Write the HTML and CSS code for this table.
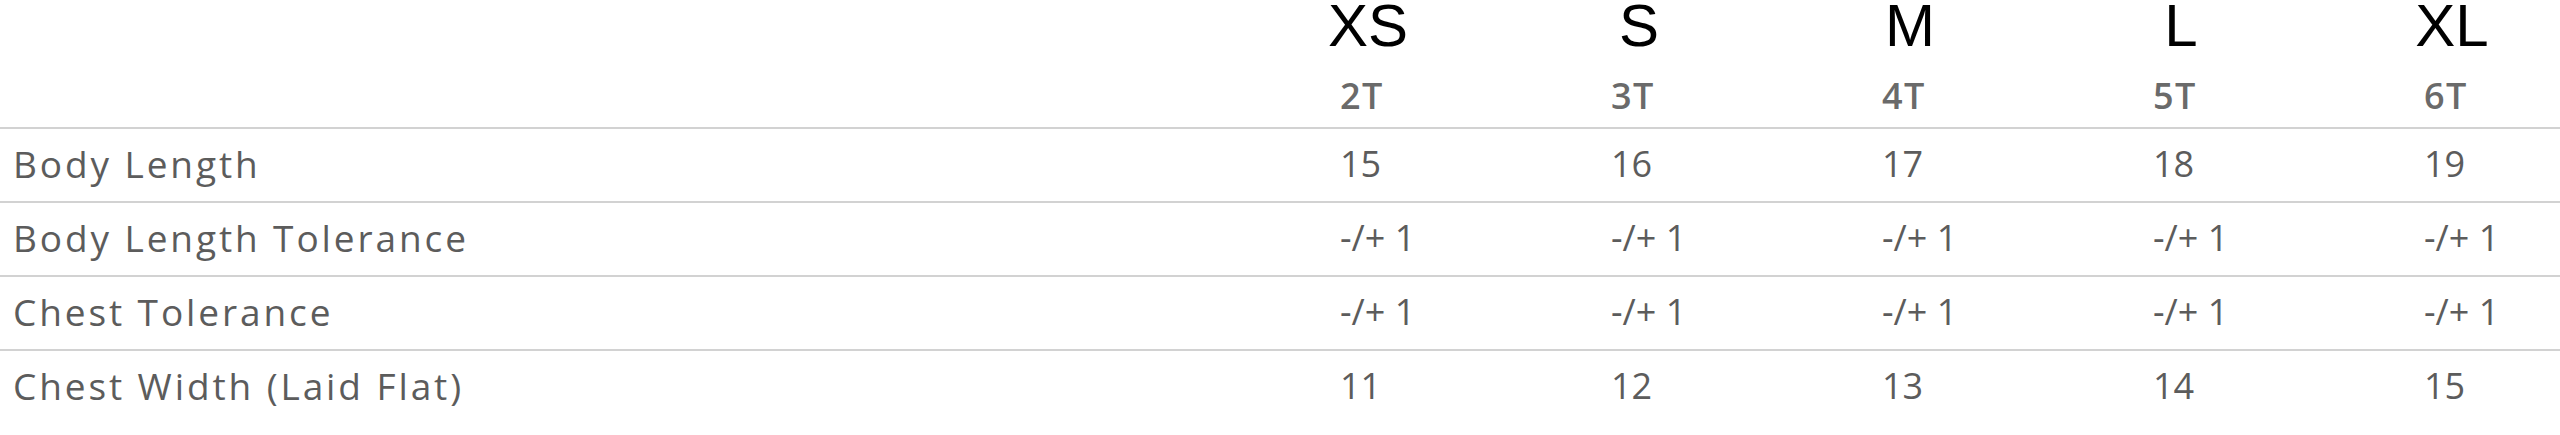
FILE: index.html
```html
<!DOCTYPE html>
<html lang="en">
<head>
<meta charset="utf-8">
<title>Size Chart</title>
<link rel="stylesheet" href="styles.css">
</head>
<body>
<div class="chart">
  <div class="row sizes">
    <div class="cell"></div>
    <div class="cell"><span class="size">XS</span></div>
    <div class="cell"><span class="size">S</span></div>
    <div class="cell"><span class="size">M</span></div>
    <div class="cell"><span class="size">L</span></div>
    <div class="cell"><span class="size">XL</span></div>
  </div>
  <div class="row sub">
    <div class="cell"></div>
    <div class="cell">2T</div>
    <div class="cell">3T</div>
    <div class="cell">4T</div>
    <div class="cell">5T</div>
    <div class="cell">6T</div>
  </div>
  <div class="row data">
    <div class="cell label">Body Length</div>
    <div class="cell">15</div>
    <div class="cell">16</div>
    <div class="cell">17</div>
    <div class="cell">18</div>
    <div class="cell">19</div>
  </div>
  <div class="row data">
    <div class="cell label">Body Length Tolerance</div>
    <div class="cell">-/+ 1</div>
    <div class="cell">-/+ 1</div>
    <div class="cell">-/+ 1</div>
    <div class="cell">-/+ 1</div>
    <div class="cell">-/+ 1</div>
  </div>
  <div class="row data">
    <div class="cell label">Chest Tolerance</div>
    <div class="cell">-/+ 1</div>
    <div class="cell">-/+ 1</div>
    <div class="cell">-/+ 1</div>
    <div class="cell">-/+ 1</div>
    <div class="cell">-/+ 1</div>
  </div>
  <div class="row data last">
    <div class="cell label">Chest Width (Laid Flat)</div>
    <div class="cell">11</div>
    <div class="cell">12</div>
    <div class="cell">13</div>
    <div class="cell">14</div>
    <div class="cell">15</div>
  </div>
</div>
</body>
</html>
```
FILE: styles.css
```css
html, body {
  margin: 0;
  padding: 0;
  background: #ffffff;
}

.chart {
  width: 2560px;
  font-family: "Open Sans", "Noto Sans", sans-serif;
  font-size: 36px;
  color: #5c5c5c;
}

.row {
  display: grid;
  grid-template-columns: 1327px repeat(4, 271px) 1fr;
  align-items: center;
}

.cell {
  padding: 0 13px;
  white-space: nowrap;
  line-height: 49px;
}

.sizes {
  height: 52px;
}

.sizes .cell {
  line-height: 52px;
  display: flex;
}

.size {
  width: 56px;
  display: flex;
  justify-content: center;
  font-family: "Liberation Sans", Arial, sans-serif;
  font-size: 60px;
  color: #000000;
}

.sub {
  height: 75px;
  align-items: start;
  border-bottom: 2px solid #d2d2d2;
}

.sub .cell {
  padding-top: 19px;
  font-weight: 600;
  letter-spacing: 1.5px;
  color: #6a6a6a;
}

.data {
  height: 72px;
  border-bottom: 2px solid #d2d2d2;
}

.data .cell {
  padding-bottom: 3px;
}

.data .label {
  font-size: 37px;
  letter-spacing: 2.9px;
}

.data.last {
  border-bottom: none;
}
```
